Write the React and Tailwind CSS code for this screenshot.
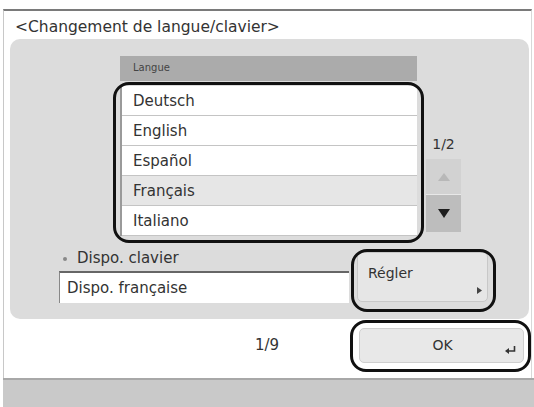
import React from "react";

const languages = [
  { name: "Deutsch", selected: false },
  { name: "English", selected: false },
  { name: "Español", selected: false },
  { name: "Français", selected: true },
  { name: "Italiano", selected: false },
];

const App = () => {
  return (
    <div
      className="relative w-[534px] h-[407px] bg-white overflow-hidden text-[#333]"
      style={{ fontFamily: '"DejaVu Sans", "Liberation Sans", sans-serif' }}
    >
      <div className="h-[9px]" />
      {/* Main frame */}
      <div className="ml-[3px] mr-[2px] h-[369px] border-t-2 border-[#7a7a7a] border-l border-r border-l-[#c8c8c8] border-r-[#d8d8d8] flex flex-col">
        <div className="h-[28px] pl-[11px] pt-[7px] text-[15.5px] leading-[18px]">
          &lt;Changement de langue/clavier&gt;
        </div>

        {/* Gray panel */}
        <div className="ml-[6px] mr-[2px] h-[280px] rounded-[10px] bg-[#dcdcdc] flex flex-col">
          <div className="flex pt-[17px] pl-[110px]">
            {/* Language list */}
            <div className="w-[297px] flex flex-col">
              <div className="h-[25px] bg-[#ababab] pl-[13px] pt-[6px] text-[10px] leading-[12px] text-[#444]">
                Langue
              </div>
              <div className="h-[5px]" />
              <div className="flex flex-col border-l-2 border-[#9a9a9a] bg-white">
                {languages.map((lang) => (
                  <div
                    key={lang.name}
                    className={`h-[30px] pl-[11px] pt-[1px] flex items-center text-[15px] border-b border-[#c4c4c4] ${lang.selected ? "bg-[#e6e6e6]" : "bg-white"}`}
                  >
                    {lang.name}
                  </div>
                ))}
              </div>
            </div>

            {/* Scroll controls */}
            <div className="ml-[9px] w-[35px] flex flex-col">
              <div className="h-[103px] flex items-end justify-center pb-[7px] text-[14px] leading-[16px]">
                1/2
              </div>
              <div className="h-[36px] bg-[#d2d2d2] border-b border-[#e8e8e8] flex items-center justify-center">
                <svg width="12" height="8" viewBox="0 0 12 8">
                  <path d="M6 0 L12 8 L0 8 Z" fill="#b8b8b8" />
                </svg>
              </div>
              <div className="h-[37px] bg-[#bdbdbd] flex items-center justify-center">
                <svg width="12" height="9" viewBox="0 0 12 9">
                  <path d="M0 0 L12 0 L6 9 Z" fill="#1e1e1e" />
                </svg>
              </div>
            </div>
          </div>

          {/* Keyboard layout row */}
          <div className="flex pl-[49px] pt-[14px]">
            <div className="w-[290px] flex flex-col">
              <div className="h-[17px] flex items-center text-[15px]">
                <span className="w-[4px] h-[4px] rounded-full bg-[#888] ml-[4px] mr-[10px]" />
                <span>Dispo. clavier</span>
              </div>
              <div className="mt-[4px] h-[32px] bg-white border-t-2 border-l border-[#666] border-l-[#888] pl-[7px] flex items-center text-[15px]">
                Dispo. française
              </div>
            </div>
            <div className="ml-[8px] mt-[2px] w-[131px] h-[50px] rounded-[5px] bg-[#e6e6e6] border border-[#c8c8c8] relative pl-[10px] pt-[12px] text-[14px] leading-[16px]">
              Régler
              <svg className="absolute right-[5px] bottom-[7px]" width="5" height="7" viewBox="0 0 5 7">
                <path d="M0 0 L5 3.5 L0 7 Z" fill="#444" />
              </svg>
            </div>
          </div>
        </div>

        {/* Bottom row */}
        <div className="flex items-center pt-[9px]">
          <div className="ml-[251px] w-[30px] text-[15px]">1/9</div>
          <div className="ml-[74px] w-[165px] h-[35px] rounded-[5px] bg-[#e8e8e8] border border-[#cfcfcf] relative flex items-center justify-center text-[14px]">
            <span className="ml-[2px]">OK</span>
            <svg className="absolute right-[7px] bottom-[7px]" width="11" height="9" viewBox="0 0 11 9">
              <path d="M9.5 0 L9.5 5 L3 5" stroke="#333" strokeWidth="1.6" fill="none" />
              <path d="M0 5 L4 2 L4 8 Z" fill="#333" />
            </svg>
          </div>
        </div>
      </div>

      {/* Footer bar */}
      <div className="ml-[3px] h-[30px] bg-[#c9c9c9] border-t-2 border-[#a8a8a8]" />

      {/* Annotation outlines */}
      <div className="absolute left-[113px] top-[82px] w-[311px] h-[161px] rounded-[16px] border-[3px] border-[#111] pointer-events-none" />
      <div className="absolute left-[351px] top-[249px] w-[145px] h-[63px] rounded-[16px] border-[3px] border-[#111] pointer-events-none" />
      <div className="absolute left-[350px] top-[320px] w-[181px] h-[52px] rounded-[16px] border-[3px] border-[#111] pointer-events-none" />
    </div>
  );
};

export default App;
